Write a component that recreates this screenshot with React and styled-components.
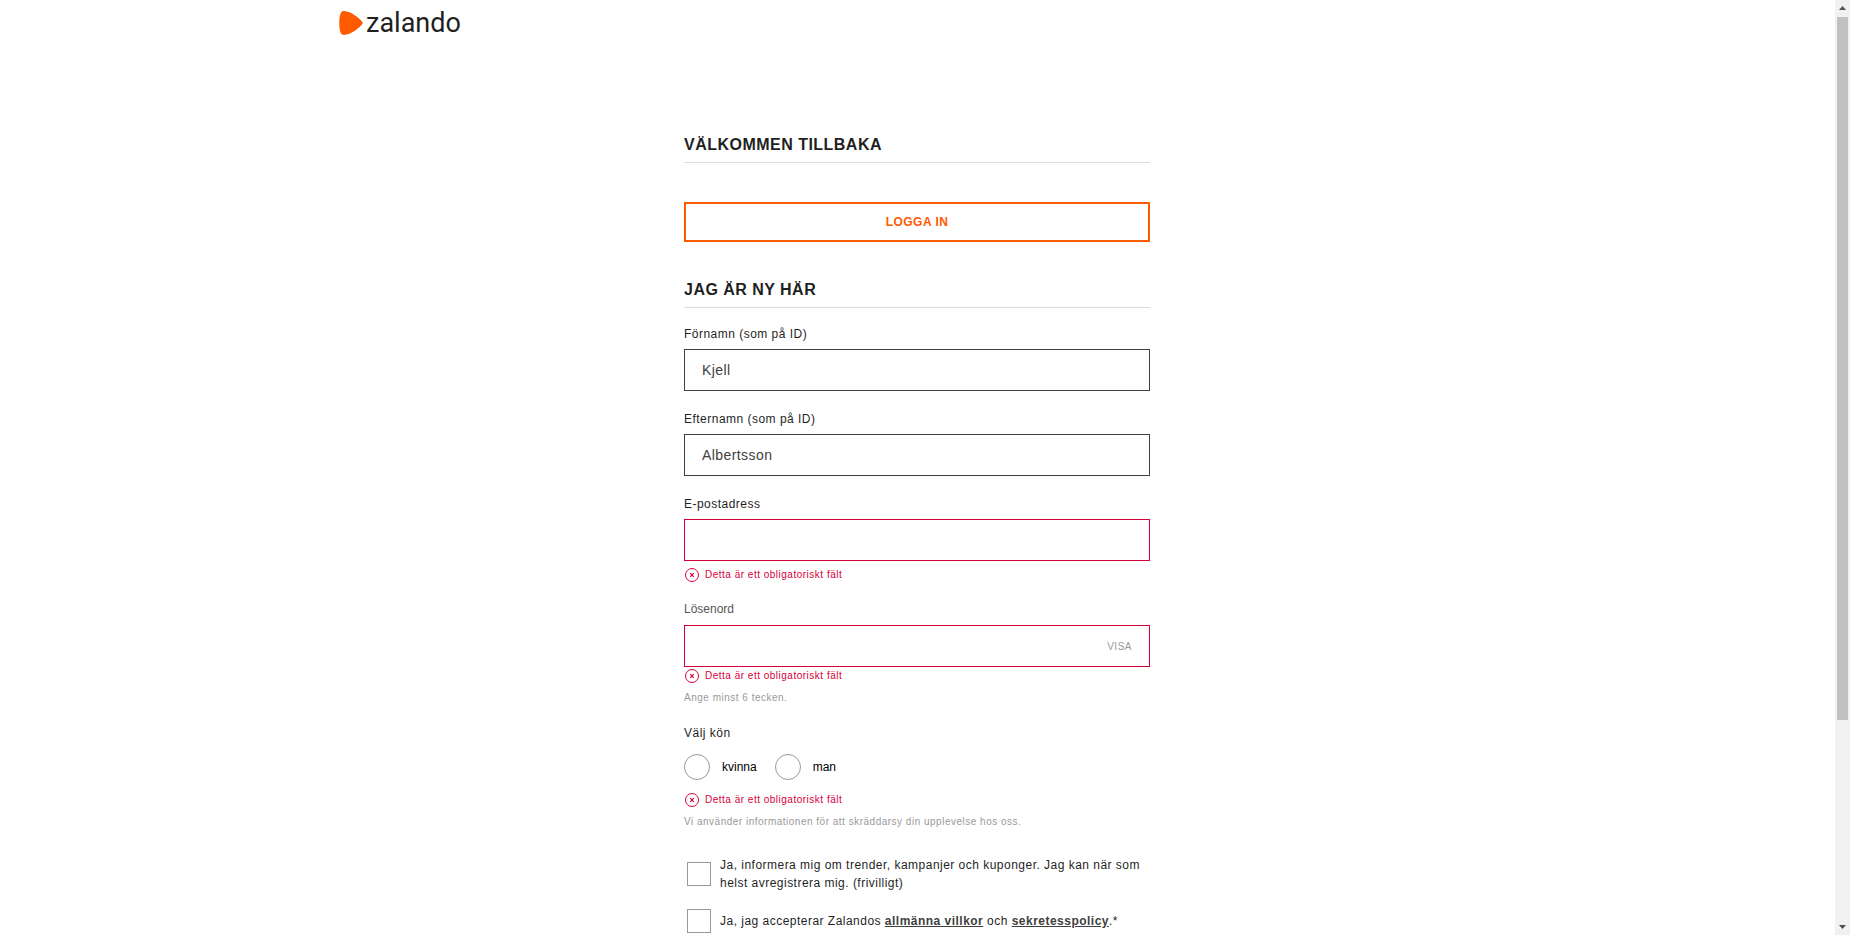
import React from "react";
import styled, { createGlobalStyle } from "styled-components";

const color = {
  orange: "#ff5a00",
  red: "#d6003b",
  ink: "#1f1f1f",
  dark: "#404040",
  grey: "#999",
  line: "#dcdcdc",
};

const GlobalStyle = createGlobalStyle`
  *, *::before, *::after { box-sizing: border-box; }
  body {
    margin: 0;
    background: #fff;
    color: ${color.ink};
    font: 12px/18px "Liberation Sans", Arial, sans-serif;
  }
  input, button { font-family: inherit; margin: 0; }
`;

const Viewport = styled.div`
  display: flex;
  height: 100vh;
  overflow: hidden;
`;

const Page = styled.div`
  flex: 1;
  min-width: 0;
  overflow: hidden;
`;

const Header = styled.header`
  max-width: 1157px;
  height: 60px;
  margin: 0 auto;
  padding-top: 11px;
`;

const Logo = styled.a`
  display: inline-flex;
  align-items: center;
  gap: 3px;
  height: 24px;
  color: ${color.ink};
  text-decoration: none;
  font: 27px/24px Roboto, sans-serif;
`;

const Main = styled.main`
  max-width: 467px;
  margin: 0 auto;
  padding: 73px 1px 0 0;
`;

const Title = styled.h2`
  margin: 0;
  padding-bottom: 5px;
  border-bottom: 1px solid ${color.line};
  font-size: 16px;
  line-height: 24px;
  letter-spacing: 0.03em;
  text-transform: uppercase;
`;

const LoginButton = styled.button`
  display: block;
  width: 100%;
  height: 40px;
  margin: 39px 0 36px;
  border: 2px solid ${color.orange};
  background: #fff;
  color: ${color.orange};
  font-size: 12px;
  font-weight: bold;
  letter-spacing: 0.04em;
  text-transform: uppercase;
`;

const Form = styled.form`
  display: flex;
  flex-direction: column;
  gap: 19px;
  padding-top: 17px;
`;

const Field = styled.div`
  display: flex;
  flex-direction: column;
`;

const Label = styled.label`
  margin-bottom: ${(p) => (p.$plain ? 8 : 6)}px;
  color: ${(p) => (p.$plain ? "#555" : color.ink)};
  line-height: ${(p) => (p.$plain ? 16 : 18)}px;
  letter-spacing: ${(p) => (p.$plain ? "normal" : "0.04em")};
`;

const InputFrame = styled.div`
  display: flex;
  height: 42px;
  border: 1px solid ${(p) => (p.$invalid ? color.red : color.dark)};
`;

const Input = styled.input`
  flex: 1;
  min-width: 0;
  padding: 0 17px;
  border: 0;
  outline: 0;
  background: transparent;
  color: ${color.dark};
  font-size: 14px;
  letter-spacing: 0.03em;
`;

const RevealButton = styled.button`
  padding: 0 17px;
  border: 0;
  background: transparent;
  color: ${color.grey};
  font-size: 10px;
  letter-spacing: 0.05em;
`;

const ErrorRow = styled.p`
  display: flex;
  align-items: center;
  gap: 6px;
  margin: ${(p) => p.$gap}px 0 0;
  padding-left: 1px;
  color: ${color.red};
  font-size: 10px;
  line-height: 14px;
  letter-spacing: 0.05em;
`;

const Hint = styled.p`
  margin: 8px 0 0;
  color: ${color.grey};
  font-size: 10px;
  line-height: 14px;
  letter-spacing: 0.05em;
`;

const RadioGroup = styled.fieldset`
  min-width: 0;
  margin: 0;
  padding: 0;
  border: 0;
`;

const Legend = styled.legend`
  padding: 0;
  margin-bottom: 12px;
  letter-spacing: 0.04em;
`;

const Options = styled.div`
  display: flex;
  gap: 18px;
`;

const Option = styled.label`
  display: flex;
  align-items: center;
  gap: 12px;
  color: #000;
`;

const Radio = styled.input`
  appearance: none;
  width: 26px;
  height: 26px;
  border: 1px solid ${color.grey};
  border-radius: 50%;
  &:checked { border: 8px solid ${color.orange}; }
`;

const Consents = styled.div`
  display: flex;
  flex-direction: column;
  gap: 17px;
  padding: 8px 0 40px 3px;
`;

const Consent = styled.label`
  display: flex;
  align-items: center;
  gap: 9px;
  letter-spacing: 0.04em;
`;

const Checkbox = styled.input`
  appearance: none;
  flex: none;
  width: 24px;
  height: 24px;
  border: 1px solid ${color.grey};
  &:checked { background: ${color.orange}; }
`;

const TextLink = styled.a`
  color: ${color.dark};
  font-weight: bold;
`;

const ScrollTrack = styled.div`
  flex: none;
  display: flex;
  flex-direction: column;
  width: 15px;
  background: #f1f1f1;
`;

const ScrollArrow = styled.svg`
  display: block;
  flex: none;
  width: 15px;
  height: 17px;
  fill: #505050;
`;

const ScrollLane = styled.div`
  flex: 1;
  padding: 0 2px;
`;

const ScrollThumb = styled.div`
  height: 78%;
  background: #c1c1c1;
`;

function RequiredError({ gap }) {
  return (
    <ErrorRow $gap={gap} role="alert">
      <svg width="14" height="14" viewBox="0 0 14 14" fill="none" stroke="currentColor" aria-hidden="true">
        <circle cx="7" cy="7" r="6.5" />
        <path d="M5.2 5.2l3.6 3.6M8.8 5.2l-3.6 3.6" strokeWidth="1.2" />
      </svg>
      Detta är ett obligatoriskt fält
    </ErrorRow>
  );
}

function TextField({ id, label, value = "", type = "text", plain, invalid, errorGap, hint, children }) {
  return (
    <Field>
      <Label htmlFor={id} $plain={plain}>{label}</Label>
      <InputFrame $invalid={invalid}>
        <Input id={id} type={type} defaultValue={value} />
        {children}
      </InputFrame>
      {invalid && <RequiredError gap={errorGap} />}
      {hint && <Hint>{hint}</Hint>}
    </Field>
  );
}

export default function App() {
  return (
    <Viewport>
      <GlobalStyle />
      <Page>
        <Header>
          <Logo href="#">
            <svg width="24" height="24" viewBox="0 0 24 24" fill={color.orange} aria-hidden="true">
              <path d="M3.2.4C4.2-.2 8.500-.2 14.200 3.200c5.700 3.300 8.600 6.900 9.300 8 .3.500.3 1.100 0 1.600-.7 1.100-3.600 4.700-9.300 8C8.500 24.200 4.200 24.200 3.200 23.600c-.5-.3-.8-.600-1.100-1.100C1.300 21 .300 18.500.300 12S1.300 3 2.100 1.500C2.400 1 2.700.7 3.200.4z" />
            </svg>
            zalando
          </Logo>
        </Header>
        <Main>
          <Title>Välkommen tillbaka</Title>
          <LoginButton type="button">Logga in</LoginButton>
          <Title>Jag är ny här</Title>
          <Form>
            <TextField id="firstname" label="Förnamn (som på ID)" value="Kjell" />
            <TextField id="lastname" label="Efternamn (som på ID)" value="Albertsson" />
            <TextField id="email" label="E-postadress" type="email" invalid errorGap={7} />
            <TextField id="password" label="Lösenord" type="password" plain invalid errorGap={2} hint="Ange minst 6 tecken.">
              <RevealButton type="button">VISA</RevealButton>
            </TextField>
            <RadioGroup>
              <Legend>Välj kön</Legend>
              <Options>
                <Option><Radio type="radio" name="gender" value="female" />kvinna</Option>
                <Option><Radio type="radio" name="gender" value="male" />man</Option>
              </Options>
              <RequiredError gap={13} />
              <Hint>Vi använder informationen för att skräddarsy din upplevelse hos oss.</Hint>
            </RadioGroup>
            <Consents>
              <Consent>
                <Checkbox type="checkbox" name="newsletter" />
                <span>Ja, informera mig om trender, kampanjer och kuponger. Jag kan när som helst avregistrera mig. (frivilligt)</span>
              </Consent>
              <Consent>
                <Checkbox type="checkbox" name="terms" />
                <span>
                  Ja, jag accepterar Zalandos <TextLink href="#">allmänna villkor</TextLink> och{" "}
                  <TextLink href="#">sekretesspolicy</TextLink>.*
                </span>
              </Consent>
            </Consents>
          </Form>
        </Main>
      </Page>
      <ScrollTrack aria-hidden="true">
        <ScrollArrow viewBox="0 0 15 17"><path d="M4 10h7L7.500 6z" /></ScrollArrow>
        <ScrollLane><ScrollThumb /></ScrollLane>
        <ScrollArrow viewBox="0 0 15 17"><path d="M4 7h7l-3.500 4z" /></ScrollArrow>
      </ScrollTrack>
    </Viewport>
  );
}
